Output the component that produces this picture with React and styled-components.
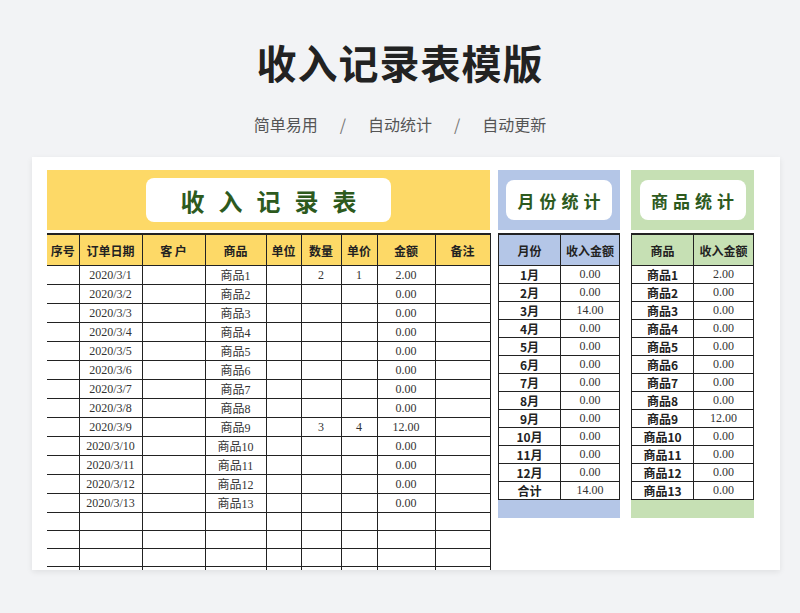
import styled, { createGlobalStyle } from "styled-components";

const Global = createGlobalStyle`
  body { margin: 0; background: #f2f3f5; font-family: "Noto Sans CJK SC", sans-serif; }
`;

const Page = styled.div`
  width: 800px;
  height: 613px;
  overflow: hidden;
  display: flex;
  flex-direction: column;
  align-items: center;
`;

const Title = styled.h1`
  margin: 33px 0 0;
  height: 56px;
  font-size: 40px;
  font-weight: 700;
  color: #222;
  letter-spacing: 1px;
`;

const Sub = styled.div`
  margin-top: 23px;
  display: flex;
  gap: 22px;
  font-size: 16px;
  color: #555;
  span.sep { color: #777; }
`;

const Card = styled.div`
  margin-top: 21px;
  margin-left: 12px;
  width: 748px;
  height: 413px;
  background: #fff;
  box-shadow: 0 2px 6px rgba(0,0,0,0.08);
  padding: 13px 0 0 15px;
  box-sizing: border-box;
  display: flex;
  align-items: flex-start;
  gap: 8px;
  overflow: hidden;
`;

const Panel = styled.div`
  display: flex;
  flex-direction: column;
  width: ${(p) => p.w}px;
  margin-right: ${(p) => p.mr || 0}px;
`;

const Banner = styled.div`
  height: 60px;
  background: ${(p) => p.bg};
  display: flex;
  align-items: center;
  justify-content: center;
  margin-bottom: 3px;
`;

const Badge = styled.div`
  background: #fff;
  border-radius: 8px;
  width: ${(p) => p.w}px;
  height: ${(p) => p.h}px;
  display: flex;
  align-items: center;
  justify-content: center;
  color: #2d5a1e;
  font-weight: 700;
  font-size: ${(p) => p.fs}px;
  letter-spacing: ${(p) => p.ls}px;
  text-indent: ${(p) => p.ls}px;
`;

const Table = styled.table`
  border-collapse: collapse;
  table-layout: fixed;
  width: 100%;
  font-family: "Liberation Serif", "Noto Sans CJK SC", serif;
  font-size: 12px;
  color: #333;
  td, th {
    border: 1px solid #222;
    height: 17px;
    padding: 0;
    text-align: center;
    white-space: nowrap;
    overflow: hidden;
  }
  th {
    height: 30px;
    background: ${(p) => p.head};
    font-family: "Noto Sans CJK SC", sans-serif;
    font-weight: 700;
    font-size: 12px;
    color: #222;
    border-top: 2px solid #222;
  }
  tr > *:first-child { border-left: ${(p) => (p.open ? "none" : "1px solid #222")}; }
`;

const Label = styled.td`
  font-family: "Noto Sans CJK SC", sans-serif;
  font-weight: 700;
  color: #222;
`;

const Foot = styled.div`
  height: 18px;
  background: ${(p) => p.bg};
`;

const cols = [32, 63, 63, 61, 35, 40, 36, 58, 55];
const heads = ["序号", "订单日期", "客 户", "商品", "单位", "数量", "单价", "金额", "备注"];
const rows = Array.from({ length: 13 }, (_, i) => ({
  d: `2020/3/${i + 1}`,
  g: `商品${i + 1}`,
  q: i === 0 ? "2" : i === 8 ? "3" : "",
  p: i === 0 ? "1" : i === 8 ? "4" : "",
  a: i === 0 ? "2.00" : i === 8 ? "12.00" : "0.00",
}));
const months = Array.from({ length: 12 }, (_, i) => [`${i + 1}月`, i === 2 ? "14.00" : "0.00"]).concat([["合计", "14.00"]]);
const goods = rows.map((r) => [r.g, r.a]);

function Side({ w, bg, title, head, data }) {
  return (
    <Panel w={w} mr={w === 122 ? 3 : 0}>
      <Banner bg={bg}>
        <Badge w={106} h={40} fs={17} ls={5}>{title}</Badge>
      </Banner>
      <Table head={bg}>
        <colgroup><col style={{ width: 62 }} /><col /></colgroup>
        <thead><tr><th>{head}</th><th>收入金额</th></tr></thead>
        <tbody>
          {data.map(([k, v]) => (
            <tr key={k}><Label>{k}</Label><td>{v}</td></tr>
          ))}
        </tbody>
      </Table>
      <Foot bg={bg} />
    </Panel>
  );
}

export default function App() {
  return (
    <Page>
      <Global />
      <Title>收入记录表模版</Title>
      <Sub><span>简单易用</span><span className="sep">/</span><span>自动统计</span><span className="sep">/</span><span>自动更新</span></Sub>
      <Card>
        <Panel w={443}>
          <Banner bg="#fdd967">
            <Badge w={245} h={44} fs={24} ls={14}>收入记录表</Badge>
          </Banner>
          <Table head="#fdd967" open>
            <colgroup>{cols.map((c, i) => <col key={i} style={{ width: c }} />)}</colgroup>
            <thead><tr>{heads.map((h) => <th key={h}>{h}</th>)}</tr></thead>
            <tbody>
              {rows.map((r) => (
                <tr key={r.d}><td /><td>{r.d}</td><td /><td>{r.g}</td><td /><td>{r.q}</td><td>{r.p}</td><td>{r.a}</td><td /></tr>
              ))}
              {[0, 1, 2, 3].map((i) => (
                <tr key={i}>{cols.map((_, j) => <td key={j} />)}</tr>
              ))}
            </tbody>
          </Table>
        </Panel>
        <Side w={122} bg="#b4c6e7" title="月份统计" head="月份" data={months} />
        <Side w={123} bg="#c6e0b4" title="商品统计" head="商品" data={goods} />
      </Card>
    </Page>
  );
}
